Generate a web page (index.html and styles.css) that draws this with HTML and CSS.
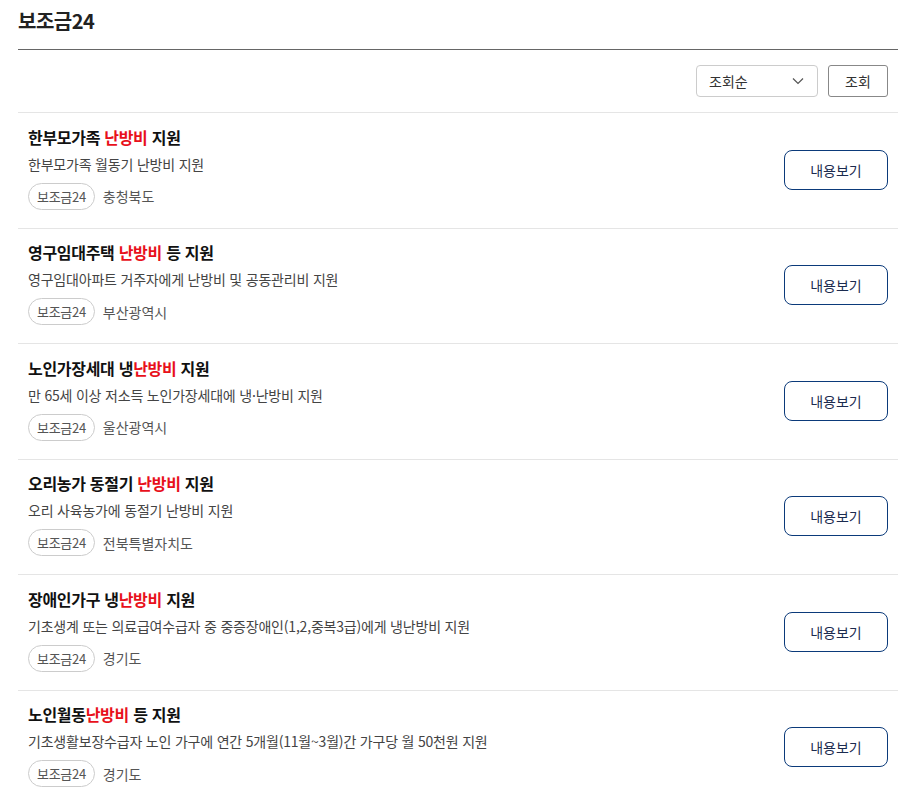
FILE: index.html
```html
<!DOCTYPE html>
<html lang="ko">
  <head>
    <meta charset="utf-8" />
    <meta name="viewport" content="width=device-width, initial-scale=1.0" />
    <title>보조금24</title>
    <link rel="stylesheet" href="styles.css">
  </head>
  <body>
    <section class="board">
      <h2 class="board-title">보조금24</h2>
      <div class="toolbar">
        <div class="select">
          <span>조회순</span>
          <svg width="12" height="8" viewBox="0 0 12 8"><path d="M1 1.5l5 5 5-5" fill="none" stroke="#555" stroke-width="1.2"/></svg>
        </div>
        <button class="btn-search">조회</button>
      </div>
      <ul class="list">
        <li class="item">
          <div class="info">
            <h3 class="name">한부모가족 <em>난방비</em> 지원</h3>
            <p class="desc">한부모가족 월동기 난방비 지원</p>
            <div class="meta"><span class="pill">보조금24</span><span class="region">충청북도</span></div>
          </div>
          <button class="btn-view">내용보기</button>
        </li>
        <li class="item">
          <div class="info">
            <h3 class="name">영구임대주택 <em>난방비</em> 등 지원</h3>
            <p class="desc">영구임대아파트 거주자에게 난방비 및 공동관리비 지원</p>
            <div class="meta"><span class="pill">보조금24</span><span class="region">부산광역시</span></div>
          </div>
          <button class="btn-view">내용보기</button>
        </li>
        <li class="item">
          <div class="info">
            <h3 class="name">노인가장세대 냉<em>난방비</em> 지원</h3>
            <p class="desc">만 65세 이상 저소득 노인가장세대에 냉·난방비 지원</p>
            <div class="meta"><span class="pill">보조금24</span><span class="region">울산광역시</span></div>
          </div>
          <button class="btn-view">내용보기</button>
        </li>
        <li class="item">
          <div class="info">
            <h3 class="name">오리농가 동절기 <em>난방비</em> 지원</h3>
            <p class="desc">오리 사육농가에 동절기 난방비 지원</p>
            <div class="meta"><span class="pill">보조금24</span><span class="region">전북특별자치도</span></div>
          </div>
          <button class="btn-view">내용보기</button>
        </li>
        <li class="item">
          <div class="info">
            <h3 class="name">장애인가구 냉<em>난방비</em> 지원</h3>
            <p class="desc">기초생계 또는 의료급여수급자 중 중증장애인(1,2,중복3급)에게 냉난방비 지원</p>
            <div class="meta"><span class="pill">보조금24</span><span class="region">경기도</span></div>
          </div>
          <button class="btn-view">내용보기</button>
        </li>
        <li class="item">
          <div class="info">
            <h3 class="name">노인월동<em>난방비</em> 등 지원</h3>
            <p class="desc">기초생활보장수급자 노인 가구에 연간 5개월(11월~3월)간 가구당 월 50천원 지원</p>
            <div class="meta"><span class="pill">보조금24</span><span class="region">경기도</span></div>
          </div>
          <button class="btn-view">내용보기</button>
        </li>
      </ul>
    </section>
  </body>
</html>
```

FILE: styles.css
```css
html,
body {
  margin: 0;
  background: #fff;
  color: #222;
  font-family: "Noto Sans CJK KR", "Noto Sans", sans-serif;
}
.board {
  padding: 0 24px 0 18px;
}
.board-title {
  margin: 0;
  padding-top: 6px;
  height: 43px;
  font-size: 20px;
  line-height: 30px;
  font-weight: 700;
  letter-spacing: -0.5px;
  border-bottom: 1px solid #666;
}
.toolbar {
  display: flex;
  justify-content: flex-end;
  gap: 10px;
  padding: 15px 10px 15px;
  border-bottom: 1px solid #e5e5e5;
}
.select {
  box-sizing: border-box;
  width: 122px;
  height: 32px;
  padding: 0 13px 0 12px;
  display: flex;
  align-items: center;
  justify-content: space-between;
  border: 1px solid #ccc;
  border-radius: 4px;
  font-size: 14px;
  color: #333;
}
.btn-search {
  box-sizing: border-box;
  width: 60px;
  height: 32px;
  border: 1px solid #888;
  border-radius: 3px;
  background: #fff;
  font-family: inherit;
  font-size: 14px;
  color: #333;
  cursor: pointer;
}
.list {
  list-style: none;
  margin: 0;
  padding: 0;
}
.item {
  display: flex;
  align-items: center;
  justify-content: space-between;
  padding: 12.5px 10px 18px;
  border-bottom: 1px solid #e5e5e5;
}
.item:last-child {
  border-bottom: none;
}
.name {
  margin: 0;
  font-size: 16px;
  line-height: 22px;
  font-weight: 700;
  color: #111;
  letter-spacing: -0.3px;
}
.name em {
  font-style: normal;
  color: #e8101b;
}
.desc {
  margin: 5px 0 0;
  font-size: 14px;
  line-height: 22px;
  color: #444;
  letter-spacing: -0.2px;
}
.meta {
  display: flex;
  align-items: center;
  gap: 8px;
  margin-top: 8px;
}
.pill {
  box-sizing: border-box;
  height: 27px;
  padding: 0 8px;
  display: inline-flex;
  align-items: center;
  border: 1px solid #ccc;
  border-radius: 14px;
  font-size: 13px;
  color: #555;
  letter-spacing: -0.3px;
}
.region {
  font-size: 14px;
  color: #555;
}
.btn-view {
  flex: none;
  box-sizing: border-box;
  width: 104px;
  height: 40px;
  margin-top: 4px;
  border: 1px solid #0b3a7a;
  border-radius: 8px;
  background: #fff;
  font-family: inherit;
  font-size: 14px;
  color: #1b2b4f;
  cursor: pointer;
}
```
